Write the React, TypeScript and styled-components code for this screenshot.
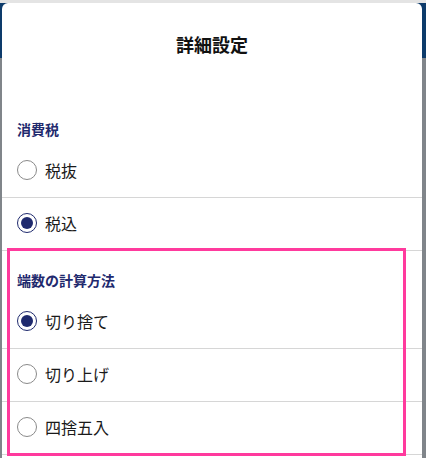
import React from "react";
import styled, { createGlobalStyle } from "styled-components";

const Global = createGlobalStyle`
  html, body { margin: 0; padding: 0; }
  body {
    width: 426px;
    height: 458px;
    overflow: hidden;
    font-family: "Noto Sans CJK JP", "Noto Sans", sans-serif;
    background: #858a8f;
  }
`;

const Backdrop = styled.div`
  position: relative;
  width: 426px;
  height: 458px;
  overflow: hidden;
  background:
    linear-gradient(#e4e4e4 0 3px, #0d3b6b 3px 58px, #80858a 58px 100%);
  padding: 3px 4px 0 2px;
  box-sizing: border-box;
`;

const Modal = styled.div`
  position: relative;
  background: #ffffff;
  border-radius: 6px 6px 0 0;
  height: 460px;
`;

const Header = styled.div`
  height: 97px;
  padding-top: 30px;
  box-sizing: border-box;
  text-align: center;
  font-size: 18px;
  line-height: 22px;
  font-weight: 700;
  color: #111;
`;

const SectionLabel = styled.div`
  padding: 19px 15px 6px;
  font-size: 14px;
  line-height: 20px;
  font-weight: 700;
  color: #1f2a6e;
`;

const Row = styled.label`
  display: flex;
  align-items: center;
  gap: 8px;
  padding: 0 15px 2px;
  box-sizing: border-box;
  border-bottom: 1px solid #d6d6d6;
  height: 53px;
  font-size: 16px;
  color: #1a1a1a;
`;

const Radio = styled.span<{ $checked?: boolean }>`
  width: 20px;
  height: 20px;
  box-sizing: border-box;
  border-radius: 50%;
  border: 1.5px solid ${(p) => (p.$checked ? "#1f2a6e" : "#8a8a8a")};
  display: flex;
  align-items: center;
  justify-content: center;
  &::after {
    content: "";
    width: 12px;
    height: 12px;
    border-radius: 50%;
    background: ${(p) => (p.$checked ? "#1f2a6e" : "transparent")};
  }
`;

const Highlight = styled.div`
  position: absolute;
  left: 5px;
  top: 245px;
  width: 399px;
  height: 208px;
  box-sizing: border-box;
  border: 3.5px solid #ff3a9d;
  pointer-events: none;
`;

type Opt = { label: string; checked?: boolean };

const Section = ({ title, options }: { title: string; options: Opt[] }) => (
  <div>
    <SectionLabel>{title}</SectionLabel>
    {options.map((o) => (
      <Row key={o.label}>
        <Radio $checked={o.checked} />
        {o.label}
      </Row>
    ))}
  </div>
);

export default function App() {
  return (
    <>
      <Global />
      <Backdrop>
        <Modal>
          <Header>詳細設定</Header>
          <Section
            title="消費税"
            options={[{ label: "税抜" }, { label: "税込", checked: true }]}
          />
          <Section
            title="端数の計算方法"
            options={[
              { label: "切り捨て", checked: true },
              { label: "切り上げ" },
              { label: "四捨五入" },
            ]}
          />
          <Highlight />
        </Modal>
      </Backdrop>
    </>
  );
}
